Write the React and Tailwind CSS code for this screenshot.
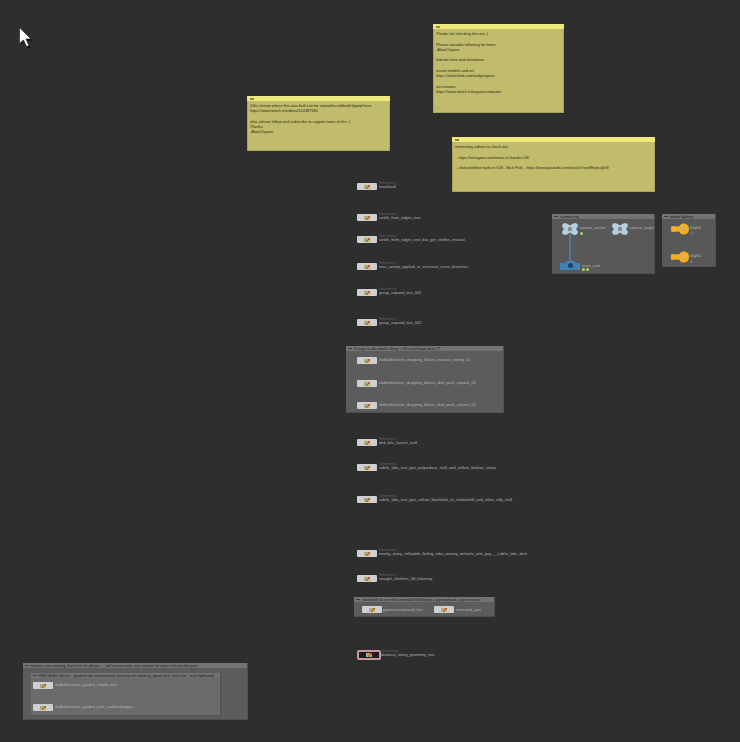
import React from "react";

const stickies = [
  {
    box: "left-[433px] top-[24px] w-[131px] h-[89px]",
    lines: "Thanks for checking this out :)\n\nPlease consider following for more:\n-Alan/Organic\n\nfind me here and elsewhere:\n\nrecent models and art:\nhttps://sketchfab.com/ardtyorganic\n\nart streams:\nhttps://www.twitch.tv/organiccomputer\n\n\n...",
  },
  {
    box: "left-[452px] top-[137px] w-[203px] h-[55px]",
    lines: "interesting videos to check out:\n\n - https://entagma.com/xmas-in-houdini-18/\n\n - vfxd workflow tools in h18 - Nick Petit - https://www.youtube.com/watch?v=nlRhjm-lgfs8",
  },
  {
    box: "left-[247px] top-[96px] w-[143px] h-[55px]",
    lines: "20hr stream where this was built can be viewed/scrubbed/clipped here:\nhttps://www.twitch.tv/videos/514387582\n\nalso, please follow and subscribe to support more of this :)\nThanks\n-Alan/Organic",
  },
];

const frames = [
  { box: "left-[346px] top-[346px] w-[158px] h-[67px] bg-[#5c5c5c]", title: "3 ways to do similar thing ~ 03 is perhaps best ??" },
  { box: "left-[354px] top-[597px] w-[141px] h-[20px] bg-[#5c5c5c]", title: "view both to see the animated bolt body + pyrospread + pyro source" },
  { box: "left-[23px] top-[663px] w-[225px] h-[57px] bg-[#5c5c5c]", title: "broken, not working, but here for phase --- will revisit soon, see stream for more info on this part" },
  { box: "left-[31px] top-[673px] w-[190px] h-[43px] bg-[#6b6b6b]", title: "RBD Bullet Solver - guided sim experiments (mostly not working, good luck, have fun, stay hydrated)" },
  { box: "left-[552px] top-[214px] w-[103px] h-[60px] bg-[#585858]", title: "camera rig" },
  { box: "left-[662px] top-[214px] w-[54px] h-[53px] bg-[#585858]", title: "mood lighting" },
];

const nodes = [
  { btn: "left-[357px] top-[183px]", txt: "left-[379px] top-[180px]", name: "heartland", type: true },
  { btn: "left-[357px] top-[214px]", txt: "left-[379px] top-[211px]", name: "sinkle_from_edges_test", type: true },
  { btn: "left-[357px] top-[236px]", txt: "left-[379px] top-[233px]", name: "sinkle_from_edges_test_but_get_skittles_instead", type: true },
  { btn: "left-[357px] top-[263px]", txt: "left-[379px] top-[260px]", name: "mos_sweep_applied_in_recursive_curve_branches", type: true },
  { btn: "left-[357px] top-[289px]", txt: "left-[379px] top-[286px]", name: "group_expand_test_001", type: true },
  { btn: "left-[357px] top-[319px]", txt: "left-[379px] top-[316px]", name: "group_expand_test_002", type: true },
  { btn: "left-[357px] top-[357px]", txt: "left-[379px] top-[353px]", name: "rbdbulletsolver_dropping_blocks_manual_mixing_01" },
  { btn: "left-[357px] top-[380px]", txt: "left-[379px] top-[376px]", name: "rbdbulletsolver_dropping_blocks_dnd_pack_unpack_01" },
  { btn: "left-[357px] top-[402px]", txt: "left-[379px] top-[398px]", name: "rbdbulletsolver_dropping_blocks_dnd_pack_unpack_01" },
  { btn: "left-[357px] top-[439px]", txt: "left-[379px] top-[436px]", name: "dnd_bits_launch_stuff", type: true },
  { btn: "left-[357px] top-[464px]", txt: "left-[379px] top-[461px]", name: "sidefx_labs_test_geo_polyreduce_stuff_and_vellum_balloon_setup", type: true },
  { btn: "left-[357px] top-[496px]", txt: "left-[379px] top-[493px]", name: "sidefx_labs_test_geo_vellum_blackhole_of_skeletonfill_and_other_silly_stuff", type: true },
  { btn: "left-[357px] top-[550px]", txt: "left-[379px] top-[547px]", name: "manky_many_inflatable_flailing_tube_waving_tentacle_arm_guy___sidefx_labs_dust", type: true },
  { btn: "left-[357px] top-[575px]", txt: "left-[379px] top-[572px]", name: "straight_skeleton_3d_tinkering", type: true },
  { btn: "left-[362px] top-[606px]", txt: "left-[383px] top-[603px]", name: "pyrosourcespread_test" },
  { btn: "left-[434px] top-[606px]", txt: "left-[456px] top-[603px]", name: "animated_geo" },
  { btn: "left-[33px] top-[682px]", txt: "left-[55px] top-[678px]", name: "rbdbulletsolver_guided_simple_test" },
  { btn: "left-[33px] top-[704px]", txt: "left-[55px] top-[700px]", name: "rbdbulletsolver_guided_pool_cuebreakingyes" },
];

const NodeIcon = () => (
  <svg width="6" height="4" viewBox="0 0 6 4">
    <rect width="2" height="4" fill="#a8a89e" />
    <rect x="2" width="2" height="2" fill="#c9a04a" />
    <rect x="4" width="2" height="2" fill="#c2543c" />
    <rect x="2" y="2" width="2" height="2" fill="#84894e" />
    <rect x="4" y="2" width="2" height="2" fill="#d8b23c" />
  </svg>
);

const Sticky = ({ box, lines }) => (
  <div className={`absolute ${box} bg-[#c1bb6c] border-b border-l border-r border-[#a8a35c]`}>
    <div className="h-[5px] -mx-px bg-[#efe97c] pl-[3px] flex items-center">
      <div className="w-[4px] h-[2px] bg-[#8d8a4c]" />
    </div>
    <p className="pl-[2px] pt-[2px] text-[3.9px] leading-[5.25px] text-[#2b2a14] whitespace-pre-wrap">{lines}</p>
  </div>
);

const Frame = ({ box, title }) => (
  <div className={`absolute ${box} border-r border-b border-[#4f4f4f]`}>
    <div className="h-[5px] bg-[#737373] flex items-center gap-[2px] pl-[2px] overflow-hidden">
      <div className="w-[4px] h-[1px] bg-[#3a3a3a] shrink-0" />
      <span className="text-[3.95px] leading-[5px] text-[#1c1c1c] whitespace-nowrap">{title}</span>
    </div>
  </div>
);

const Node = ({ btn, txt, name, type }) => (
  <>
    <div className={`absolute ${btn} w-[20px] h-[7px] bg-[#cfcfcf] rounded-[1px] flex items-center justify-center`}>
      <NodeIcon />
    </div>
    <div className={`absolute ${txt} whitespace-nowrap text-[3.93px] leading-[5px]`}>
      <div className={type ? "text-[#626262]" : "text-transparent"}>Geometry</div>
      <div className="text-[#b4b4b4] -mt-[1.5px]">{name}</div>
    </div>
  </>
);

const Bone = ({ pos }) => (
  <svg className={`absolute ${pos}`} width="16" height="12" viewBox="0 0 16 12">
    <path d="M2.5 0 Q5.5 0 8 2.5 Q10.5 0 13.5 0 Q16 .5 16 3 Q15.5 4.5 14 6 Q15.5 7.5 16 9 Q16 11.5 13.5 12 Q10.5 12 8 9.5 Q5.5 12 2.5 12 Q0 11.5 0 9 Q.5 7.5 2 6 Q.5 4.5 0 3 Q0 .5 2.5 0Z" fill="#b4cee2" />
    <rect x="6" y="4" width="4" height="4" fill="#8e8e7e" />
  </svg>
);

const Light = ({ pos }) => (
  <svg className={`absolute ${pos}`} width="19" height="12" viewBox="0 0 19 12">
    <path d="M1.5 3 Q0 6 1.5 9 L9 8.5 Q11 12 14 11.5 Q19 11 19 6 Q19 1 14 .5 Q11 0 9 3.5Z" fill="#f5ad22" />
    <rect x="11" y="3.5" width="2.5" height="4" fill="#b4b4a4" />
  </svg>
);

const Dot = ({ pos, color }) => <div className={`absolute ${pos} w-[3px] h-[3px] rounded-full ${color}`} />;

const Small = ({ pos, children, color = "text-[#b4b4b4]" }) => (
  <span className={`absolute ${pos} whitespace-nowrap text-[3.9px] leading-[5px] ${color}`}>{children}</span>
);

export default function App() {
  return (
    <div className="relative w-[740px] h-[742px] overflow-hidden bg-[#2e2e2e] font-['Liberation_Sans',sans-serif]">
      {frames.map((f) => (
        <Frame key={f.title} {...f} />
      ))}
      {stickies.map((s) => (
        <Sticky key={s.box} {...s} />
      ))}
      {nodes.map((n, i) => (
        <Node key={i} {...n} />
      ))}

      {/* selected node */}
      <div className="absolute left-[357px] top-[650px] w-[24px] h-[10px] rounded-[2px] border-[2px] border-[#c99a9a] bg-[#1f1f1f] flex items-center justify-center">
        <NodeIcon />
      </div>
      <div className="absolute left-[381px] top-[648px] whitespace-nowrap text-[3.93px] leading-[5px]">
        <div className="text-[#626262]">Geometry</div>
        <div className="text-[#b4b4b4] -mt-[1.5px]">distance_along_geometry_test</div>
      </div>

      {/* camera rig */}
      <div className="absolute left-[569px] top-[234px] w-[2px] h-[28px] bg-[#5a7490]" />
      <Bone pos="left-[562px] top-[223px]" />
      <Bone pos="left-[612px] top-[223px]" />
      <Small pos="left-[579px] top-[225px]">camera_anchor</Small>
      <Small pos="left-[629px] top-[225px]">camera_target</Small>
      <Dot pos="left-[580px] top-[232px]" color="bg-[#a8d85a]" />
      <div className="absolute left-[560px] top-[263px] w-[20px] h-[7px] bg-[#3f80b8]" />
      <div className="absolute left-[566px] top-[261px] w-[9px] h-[4px] bg-[#3f80b8] rounded-t-[1px]" />
      <div className="absolute left-[568px] top-[263px] w-[5px] h-[5px] rounded-full bg-[#27415a]" />
      <Small pos="left-[582px] top-[259px]" color="text-[#626262]">Camera</Small>
      <Small pos="left-[582px] top-[263px]">main_cam</Small>
      <Dot pos="left-[582px] top-[268px]" color="bg-[#a8d85a]" />
      <Dot pos="left-[586px] top-[268px]" color="bg-[#a8d85a]" />

      {/* mood lighting */}
      <Light pos="left-[670px] top-[223px]" />
      <Light pos="left-[670px] top-[251px]" />
      <Small pos="left-[690px] top-[225px]">klight1</Small>
      <Small pos="left-[690px] top-[253px]">klight2</Small>
      <Dot pos="left-[690px] top-[232px]" color="bg-[#6a7272]" />
      <Dot pos="left-[690px] top-[260px]" color="bg-[#6a7272]" />

      {/* mouse pointer */}
      <svg className="absolute left-[17px] top-[25px]" width="18" height="25" viewBox="0 0 18 25">
        <path d="M4 4 L4 20 L8 17 L11 24 L14 23 L11 16 L16 16Z" fill="#111111" opacity="0.6" />
        <path d="M2.5 2.5 L2.5 18.5 L6.5 15 L9.5 21.5 L12 20.5 L9 14 L14 14Z" fill="#ffffff" stroke="#111111" strokeWidth="0.6" />
      </svg>
    </div>
  );
}
